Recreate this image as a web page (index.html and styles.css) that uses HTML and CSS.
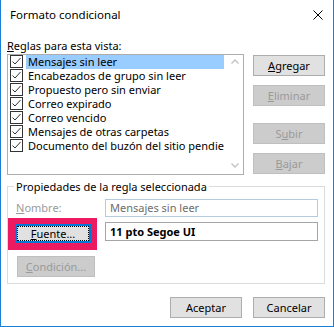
FILE: index.html
```html
<!DOCTYPE html>
<html lang="es">
<head>
<meta charset="utf-8">
<title>Formato condicional</title>
<link rel="stylesheet" href="styles.css">
</head>
<body>
<div class="window">
  <div class="titlebar">
    <span class="title">Formato condicional</span>
    <svg class="close" width="10" height="10" viewBox="0 0 10 10"><path d="M0.5 0.5L9.5 9.5M9.5 0.5L0.5 9.5" stroke="#000" stroke-width="1" fill="none"/></svg>
  </div>
  <div class="content">
    <div class="main">
      <div class="rules">
        <div class="label"><u>R</u>eglas para esta vista:</div>
        <div class="list">
          <div class="items">
            <div class="item"><svg class="cb" width="13" height="13" viewBox="0 0 13 13"><rect x="0.5" y="0.5" width="12" height="12" fill="#fff" stroke="#333"/><path d="M2.5 6.5L5 9L10.5 3" fill="none" stroke="#333"/></svg><span class="text selected">Mensajes sin leer</span></div>
            <div class="item"><svg class="cb" width="13" height="13" viewBox="0 0 13 13"><rect x="0.5" y="0.5" width="12" height="12" fill="#fff" stroke="#333"/><path d="M2.5 6.5L5 9L10.5 3" fill="none" stroke="#333"/></svg><span class="text">Encabezados de grupo sin leer</span></div>
            <div class="item"><svg class="cb" width="13" height="13" viewBox="0 0 13 13"><rect x="0.5" y="0.5" width="12" height="12" fill="#fff" stroke="#333"/><path d="M2.5 6.5L5 9L10.5 3" fill="none" stroke="#333"/></svg><span class="text">Propuesto pero sin enviar</span></div>
            <div class="item"><svg class="cb" width="13" height="13" viewBox="0 0 13 13"><rect x="0.5" y="0.5" width="12" height="12" fill="#fff" stroke="#333"/><path d="M2.5 6.5L5 9L10.5 3" fill="none" stroke="#333"/></svg><span class="text">Correo expirado</span></div>
            <div class="item"><svg class="cb" width="13" height="13" viewBox="0 0 13 13"><rect x="0.5" y="0.5" width="12" height="12" fill="#fff" stroke="#333"/><path d="M2.5 6.5L5 9L10.5 3" fill="none" stroke="#333"/></svg><span class="text">Correo vencido</span></div>
            <div class="item"><svg class="cb" width="13" height="13" viewBox="0 0 13 13"><rect x="0.5" y="0.5" width="12" height="12" fill="#fff" stroke="#333"/><path d="M2.5 6.5L5 9L10.5 3" fill="none" stroke="#333"/></svg><span class="text">Mensajes de otras carpetas</span></div>
            <div class="item"><svg class="cb" width="13" height="13" viewBox="0 0 13 13"><rect x="0.5" y="0.5" width="12" height="12" fill="#fff" stroke="#333"/><path d="M2.5 6.5L5 9L10.5 3" fill="none" stroke="#333"/></svg><span class="text">Documento del buzón del sitio pendie</span></div>
          </div>
          <div class="scroll">
            <svg width="8" height="5" viewBox="0 0 8 5"><path d="M0.5 4.5L4 1L7.5 4.5" fill="none" stroke="#c2c2c2" stroke-width="1.4"/></svg>
            <svg width="8" height="5" viewBox="0 0 8 5"><path d="M0.5 0.5L4 4L7.5 0.5" fill="none" stroke="#c2c2c2" stroke-width="1.4"/></svg>
          </div>
        </div>
      </div>
      <div class="side">
        <div class="btn"><u>A</u>gregar</div>
        <div class="btn disabled gap-s"><u>E</u>liminar</div>
        <div class="btn disabled gap-l">S<u>u</u>bir</div>
        <div class="btn disabled gap-s"><u>B</u>ajar</div>
      </div>
    </div>
    <fieldset class="group">
      <legend>Propiedades de la regla seleccionada</legend>
      <div class="row">
        <span class="field-label"><u>N</u>ombre:</span>
        <div class="input readonly">Mensajes sin leer</div>
      </div>
      <div class="row row-font">
        <div class="mark">
          <div class="btn focused"><u>F</u>uente...</div>
        </div>
        <div class="input font">11 pto Segoe UI</div>
      </div>
      <div class="row">
        <div class="btn disabled cond"><u>C</u>ondición...</div>
      </div>
    </fieldset>
    <div class="footer">
      <div class="btn">Aceptar</div>
      <div class="btn">Cancelar</div>
    </div>
  </div>
</div>
</body>
</html>
```

FILE: styles.css
```css
* { box-sizing: border-box; }

html, body {
  margin: 0;
  padding: 0;
  background: #fff;
}

body {
  font-family: "Noto Sans", "Open Sans", sans-serif;
  font-size: 11px;
  color: #000;
}

u { text-decoration-thickness: 1px; text-underline-offset: 1px; }

.window {
  width: 334px;
  height: 327px;
  border: 1px solid #1a7fd6;
  border-top: none;
  background: #fff;
  display: flex;
  flex-direction: column;
}

.titlebar {
  height: 30px;
  display: flex;
  align-items: center;
  justify-content: space-between;
  padding: 0 10px 0 9px;
}

.title {
  font-size: 11.5px;
  line-height: 16px;
}

.close { display: block; }

.content {
  padding: 8px 8px 0 6px;
  display: flex;
  flex-direction: column;
}

.main {
  display: grid;
  grid-template-columns: 237px 72px;
  column-gap: 9px;
}

.label {
  line-height: 15px;
  height: 16px;
  white-space: nowrap;
}

.list {
  height: 121px;
  border: 1px solid #adadad;
  display: flex;
}

.items {
  flex: 1;
  display: flex;
  flex-direction: column;
}

.item {
  height: 14px;
  display: flex;
  align-items: flex-start;
  padding-left: 2px;
}

.cb {
  display: block;
  flex: none;
}

.text {
  margin-left: 3px;
  padding-left: 2px;
  width: 198px;
  height: 14px;
  line-height: 14px;
  white-space: nowrap;
  overflow: hidden;
}

.selected { background: #99ccff; }

.scroll {
  width: 17px;
  display: flex;
  flex-direction: column;
  justify-content: space-between;
  align-items: center;
  padding: 4px 0 6px;
}

.scroll svg { display: block; }

.side {
  display: flex;
  flex-direction: column;
  padding-top: 17px;
}

.btn {
  height: 21px;
  border: 1px solid #adadad;
  background: #e1e1e1;
  display: flex;
  align-items: center;
  justify-content: center;
  line-height: 15px;
  white-space: nowrap;
}

.btn.disabled {
  background: #cccccc;
  border-color: #bfbfbf;
  color: #9a9a9a;
}

.gap-s { margin-top: 9px; }
.gap-l { margin-top: 17px; }

.group {
  margin: 4px 0 0;
  padding: 5px 6px 6px 8px;
  border: 1px solid #dcdcdc;
  min-width: 0;
}

.group legend {
  padding: 0 2px;
  margin-left: -2px;
  line-height: 15px;
}

.row {
  display: flex;
  align-items: flex-start;
}

.field-label {
  width: 89px;
  height: 18px;
  line-height: 18px;
  color: #9a9a9a;
}

.input {
  flex: 1;
  padding-left: 4px;
  white-space: nowrap;
}

.input.readonly {
  height: 18px;
  line-height: 16px;
  border: 1px solid #b7cbe0;
  color: #6d6d6d;
}

.row-font { margin-top: 1px; }

.mark {
  margin-left: -8px;
  width: 89px;
  padding: 6px 6px 7px 7px;
  background: #ec1a60;
}

.btn.focused {
  height: 19px;
  border: 1px solid #0078d7;
  box-shadow: inset 0 0 0 1px #0078d7;
  outline: 1px dotted #000;
  outline-offset: -3px;
}

.input.font {
  margin-top: 4px;
  margin-left: 8px;
  height: 19px;
  line-height: 17px;
  border: 1px solid #a5a5a5;
  font-weight: bold;
}

.btn.cond {
  margin-top: 6px;
  margin-left: 1px;
  width: 78px;
}

.footer {
  display: flex;
  justify-content: flex-end;
  gap: 11px;
  margin-top: 13px;
}

.footer .btn { width: 72px; }
```
